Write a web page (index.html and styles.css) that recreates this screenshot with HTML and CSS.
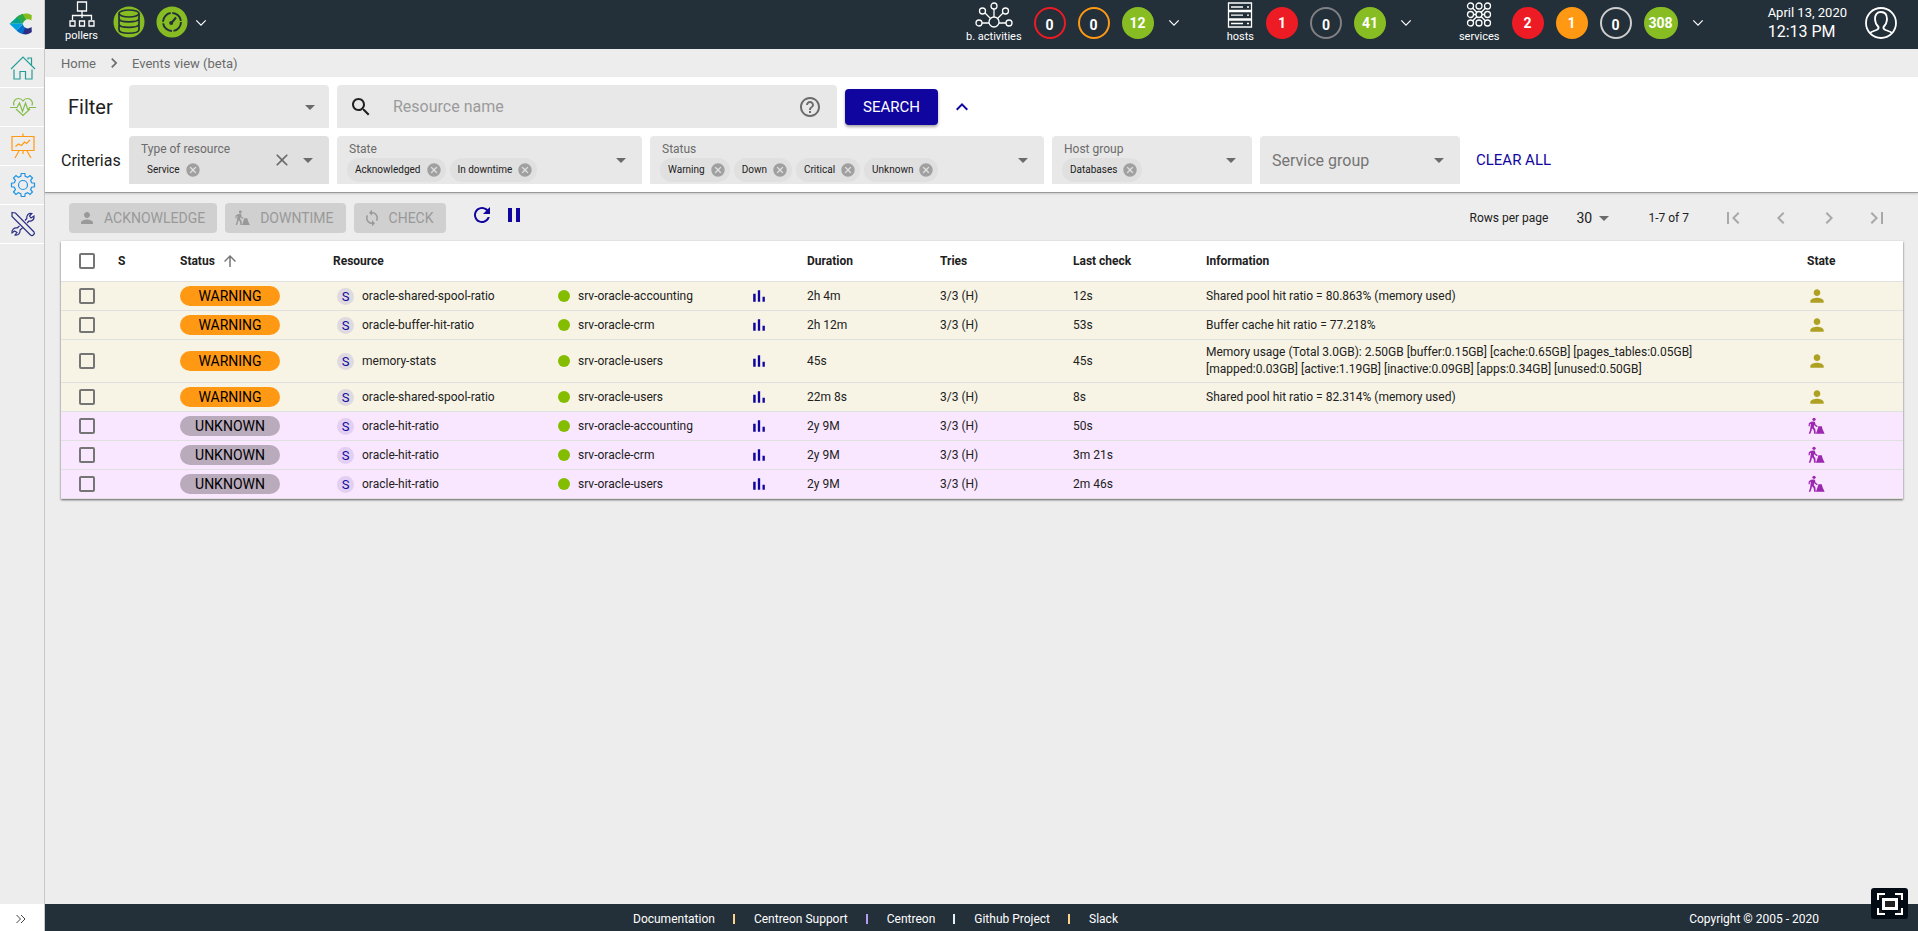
FILE: index.html
```html
<!DOCTYPE html>
<html lang="en">
<head>
<meta charset="utf-8">
<title>Centreon - Events view</title>
<link rel="stylesheet" href="styles.css">
</head>
<body>
<svg class="sprite" aria-hidden="true">
  <symbol id="i-person" viewBox="0 0 24 24"><path d="M12 12c2.21 0 4-1.79 4-4s-1.79-4-4-4-4 1.79-4 4 1.79 4 4 4zm0 2c-2.67 0-8 1.34-8 4v2h16v-2c0-2.66-5.33-4-8-4z"/></symbol>
  <symbol id="i-downtime" viewBox="0 -2 27 27"><circle cx="9.500" cy="2.400" r="2.200"/><path d="M5.500 5.800 9 5.300c1.200 0 1.700.6 1.900 1.500l.6 2.800 3 2.300-.9 1.200-3.200-2-.7-1.200-.5 3.100 2.100 2.800.6 6.200H9.600l-.6-5.200-2.200-2.400-.7 3.400-1.600 4.200H2.400l1.700-5L5.300 8.300 4 9l-.4 3H2l.5-4.300zM15.500 12h4.500l1 4 2.800 6H12l2-5.500z"/></symbol>
  <symbol id="i-sync" viewBox="0 0 24 24"><path d="M12 4V1L8 5l4 4V6c3.310 0 6 2.690 6 6 0 1.010-.25 1.970-.7 2.800l1.460 1.460C19.540 15.030 20 13.570 20 12c0-4.420-3.580-8-8-8zm0 14c-3.310 0-6-2.690-6-6 0-1.010.25-1.970.7-2.800L5.240 7.740C4.460 8.970 4 10.430 4 12c0 4.420 3.580 8 8 8v3l4-4-4-4v3z"/></symbol>
  <symbol id="i-refresh" viewBox="0 0 24 24"><path d="M17.650 6.350C16.200 4.900 14.210 4 12 4c-4.420 0-7.990 3.580-7.990 8s3.570 8 7.990 8c3.730 0 6.840-2.550 7.730-6h-2.080c-.82 2.330-3.040 4-5.650 4-3.310 0-6-2.690-6-6s2.690-6 6-6c1.660 0 3.140.69 4.220 1.780L13 11h7V4l-2.350 2.350z"/></symbol>
  <symbol id="i-pause" viewBox="0 0 24 24"><path d="M6 19h4V5H6v14zm8-14v14h4V5h-4z"/></symbol>
  <symbol id="i-search" viewBox="0 0 24 24"><path d="M15.500 14h-.79l-.28-.27C15.410 12.590 16 11.110 16 9.500 16 5.910 13.090 3 9.500 3S3 5.910 3 9.500 5.910 16 9.500 16c1.610 0 3.090-.59 4.230-1.570l.27.28v.79l5 4.990L20.490 19l-4.990-5zm-6 0C7.010 14 5 11.990 5 9.500S7.010 5 9.500 5 14 7.010 14 9.500 11.990 14 9.500 14z"/></symbol>
  <symbol id="i-help" viewBox="0 0 24 24"><path d="M11 18h2v-2h-2v2zm1-16C6.480 2 2 6.480 2 12s4.480 10 10 10 10-4.480 10-10S17.520 2 12 2zm0 18c-4.410 0-8-3.590-8-8s3.590-8 8-8 8 3.590 8 8-3.590 8-8 8zm0-14c-2.210 0-4 1.790-4 4h2c0-1.100.9-2 2-2s2 .9 2 2c0 2-3 1.750-3 5h2c0-2.250 3-2.500 3-5 0-2.210-1.790-4-4-4z"/></symbol>
  <symbol id="i-caret" viewBox="0 0 24 24"><path d="M7 10l5 5 5-5z"/></symbol>
  <symbol id="i-close" viewBox="0 0 24 24"><path d="M19 6.410L17.590 5 12 10.590 6.410 5 5 6.410 10.590 12 5 17.590 6.410 19 12 13.410 17.590 19 19 17.590 13.410 12z"/></symbol>
  <symbol id="i-cancel" viewBox="0 0 24 24"><path d="M12 2C6.470 2 2 6.470 2 12s4.470 10 10 10 10-4.470 10-10S17.530 2 12 2zm5 13.590L15.590 17 12 13.410 8.410 17 7 15.590 10.590 12 7 8.410 8.410 7 12 10.590 15.590 7 17 8.410 13.410 12 17 15.590z"/></symbol>
  <symbol id="i-up" viewBox="0 0 24 24"><path d="M4 12l1.410 1.410L11 7.830V20h2V7.830l5.580 5.590L20 12l-8-8-8 8z"/></symbol>
  <symbol id="i-less" viewBox="0 0 24 24"><path d="M12 8l-6 6 1.410 1.410L12 10.830l4.590 4.580L18 14z"/></symbol>
  <symbol id="i-chart" viewBox="0 0 24 24"><path d="M5 9.200h3V19H5zM10.600 5h2.800v14h-2.800zm5.600 8H19v6h-2.800z"/></symbol>
  <symbol id="i-right" viewBox="0 0 24 24"><path d="M10 6L8.590 7.410 13.170 12l-4.580 4.590L10 18l6-6z"/></symbol>
  <symbol id="i-left" viewBox="0 0 24 24"><path d="M15.410 7.410L14 6l-6 6 6 6 1.410-1.410L10.830 12z"/></symbol>
  <symbol id="i-first" viewBox="0 0 24 24"><path d="M18.410 16.590L13.820 12l4.590-4.590L17 6l-6 6 6 6zM6 6h2v12H6z"/></symbol>
  <symbol id="i-last" viewBox="0 0 24 24"><path d="M5.590 7.410L10.180 12l-4.590 4.590L7 18l6-6-6-6zM16 6h2v12h-2z"/></symbol>
  <symbol id="i-down" viewBox="0 0 14 8"><path d="M1.500 1 7 6.500 12.500 1" fill="none" stroke="currentColor" stroke-width="1.400"/></symbol>
</svg>

<div class="app">
  <nav class="sidebar" aria-label="Main menu">
    <a class="logo" href="#" aria-label="Centreon">
      <svg viewBox="0 0 24 24" width="24" height="24">
        <path fill="#84bd1c" d="M12.500 2.500C16 .9 20 1.200 22.800 3.200l-.4 5.300c-2.400-1.600-4.800-1.400-6.800 0z"/>
        <path fill="#2ca84a" d="M6.500 6.500C8.500 4 10.500 3 13.500 1.800l3.500 5.900c-1.600.8-2.600 2-3 3.800z"/>
        <path fill="#00a390" d="M.5 11.700 7.500 5.500l6.400 6.200z"/>
        <path fill="#009fdf" d="M.5 11.700h13.400l-6.400 6.800z"/>
        <path fill="#0072ce" d="M7.500 18.500 13.900 12c.3 1.900 1.300 3.200 3 4.100l-3.100 6c-2.500-.8-4.500-1.900-6.300-3.600z"/>
        <path fill="#2b2e83" d="m13.600 22 2.500-6.300c2.200 1.300 4.300 1 6.500-.6l.2 5c-2.700 2.300-6 2.900-9.200 1.900z"/>
      </svg>
    </a>
    <a class="nav-item teal" href="#" aria-label="Home">
      <svg viewBox="0 0 26 26" width="26" height="26"><path d="M1 14 13 2l12 12M18 4.500V3h3.500v7M4 14.500V24h6v-7.500h5.500V24H22v-9.500"/></svg>
    </a>
    <a class="nav-item lime" href="#" aria-label="Monitoring">
      <svg viewBox="0 0 26 26" width="26" height="26"><path d="M4 11.500C2.500 7 5.500 4.500 8.500 4.500c2 0 3.500 1 4.500 2.500 1-1.500 2.500-2.500 4.500-2.500 3 0 6 2.500 4.500 7M6 15l7 6.500 7-6.500M0 13.500h7L9.500 9l3 8.500 3-8.500 2.500 7 1.500-2.500H26"/></svg>
    </a>
    <a class="nav-item amber" href="#" aria-label="Reporting">
      <svg viewBox="0 0 26 26" width="26" height="26"><path d="M2 3.500h22v14H2zM13 3.500V.5M9 18l-4 7M17 18l4 7M13 18v3M5.500 13.500l3-2.500 3 1.500 3-3.500 2 1.500 3.500-3.500"/></svg>
    </a>
    <a class="nav-item blue" href="#" aria-label="Configuration">
      <svg viewBox="0 0 26 26" width="26" height="26"><circle cx="13" cy="13" r="4.500"/><path d="M10.800 4.400 11.200 1.500h3.600l.4 2.900 2.500 1L20 3.600 22.500 6l-1.900 2.300 1 2.500 2.900.4v3.600l-2.900.4-1 2.500 1.900 2.300-2.500 2.500-2.300-1.900-2.500 1-.4 2.900h-3.600l-.4-2.900-2.500-1L6 22.500 3.500 20l1.900-2.300-1-2.500-2.900-.4v-3.600l2.900-.4 1-2.500L3.500 6 6 3.500l2.300 1.900z"/></svg>
    </a>
    <a class="nav-item navy" href="#" aria-label="Administration">
      <svg viewBox="0 0 26 26" width="26" height="26"><path d="M2 1.500 5.500 2l18.500 19c1.500 2-1.500 4.500-3.500 3L2 5.500zM15 9.500l1.800-2c-.5-3 1.500-5.500 5-5L19.500 5l1.500 2 3-2c.5 3.500-2 5.500-5 5l-1.800 2M9.500 15l-2.500 2c-3-.5-5.500 2-5 5l2.500-2L7 21.500 5 24c3.500.5 5.500-2 5-5l2.500-2"/></svg>
    </a>
    <button class="expand" type="button" aria-label="Expand menu">
      <svg viewBox="0 0 12 10" width="12" height="10"><path d="M1.500 1 5.500 5l-4 4M6 1l4 4-4 4"/></svg>
    </button>
  </nav>

  <div class="page">
    <header class="topbar">
      <div class="group pollers">
        <a class="menu" href="#">
          <svg class="line" viewBox="0 0 26 26" width="26" height="26"><path d="M8.500 1h9v9h-9zM13 10v7M3.500 19v-4.500h19V19M1 20h5v5H1zM10.500 20h5v5h-5zM20 20h5v5h-5z"/></svg>
          <span>pollers</span>
        </a>
        <span class="poller-icon"><svg viewBox="0 0 32 32" width="32" height="32"><circle cx="16" cy="16" r="15.500" fill="#87bd23"/><g fill="none" stroke="#232f39" stroke-width="1.700"><ellipse cx="16" cy="7.500" rx="10" ry="3.500"/><path d="M6 8v4.500c0 4.500 20 4.500 20 0V8M6 13.500V18c0 4.500 20 4.500 20 0v-4.500M6 19v4.500c0 5 20 5 20 0V19"/></g></svg></span>
        <span class="poller-icon"><svg viewBox="0 0 32 32" width="32" height="32"><circle cx="16" cy="16" r="15.500" fill="#87bd23"/><g fill="none" stroke="#232f39" stroke-width="2"><circle cx="16" cy="16" r="9" stroke-dasharray="12.500 1.640"/><path d="m15 17.500 5-6"/></g><circle cx="15.200" cy="17" r="2" fill="#232f39"/></svg></span>
        <button class="toggle" type="button" aria-label="Pollers details"><svg width="12" height="8"><use href="#i-down"/></svg></button>
      </div>

      <div class="group">
        <a class="menu" href="#">
          <svg class="line" viewBox="0 0 38 26" width="38" height="26"><circle cx="19" cy="20" r="5"/><circle cx="19" cy="4" r="3"/><circle cx="7.500" cy="9" r="3"/><circle cx="30.500" cy="9" r="3"/><circle cx="4" cy="21" r="3"/><circle cx="34" cy="21" r="3"/><path d="M19 7v8M10 11l5.500 5.500M28 11l-5.500 5.500M7 21h7M24 21h7"/></svg>
          <span>b. activities</span>
        </a>
        <a class="count ring-red" href="#">0</a>
        <a class="count ring-orange" href="#">0</a>
        <a class="count green" href="#">12</a>
        <button class="toggle" type="button" aria-label="Business activities details"><svg width="12" height="8"><use href="#i-down"/></svg></button>
      </div>

      <div class="group">
        <a class="menu" href="#">
          <svg class="line" viewBox="0 0 26 26" width="26" height="26"><path d="M1.500 1h23v7.500h-23zM1.500 9.500h23V17h-23zM1.500 18h23v7h-23zM4 5h12M4 13.200h12M4 21.500h12M20 5h2M20 13.200h2M20 21.500h2"/></svg>
          <span>hosts</span>
        </a>
        <a class="count red" href="#">1</a>
        <a class="count ring-gray" href="#">0</a>
        <a class="count green" href="#">41</a>
        <button class="toggle" type="button" aria-label="Hosts details"><svg width="12" height="8"><use href="#i-down"/></svg></button>
      </div>

      <div class="group">
        <a class="menu" href="#">
          <svg class="line" viewBox="0 0 26 26" width="26" height="26"><circle cx="4.500" cy="4" r="3"/><circle cx="13" cy="4" r="3"/><circle cx="21.500" cy="4" r="3"/><circle cx="4.500" cy="12.500" r="3"/><circle cx="13" cy="12.500" r="3"/><circle cx="21.500" cy="12.500" r="3"/><circle cx="4.500" cy="21" r="3"/><circle cx="13" cy="21" r="3"/><circle cx="21.500" cy="21" r="3"/><path d="m6.500 6 4.500 4.500M19.500 6 15 10.500M6.500 19l4.500-4.500M19.500 19 15 14.500M7.500 12.500H10M16 12.500h2.500"/></svg>
          <span>services</span>
        </a>
        <a class="count red" href="#">2</a>
        <a class="count orange" href="#">1</a>
        <a class="count ring-light" href="#">0</a>
        <a class="count green" href="#">308</a>
        <button class="toggle" type="button" aria-label="Services details"><svg width="12" height="8"><use href="#i-down"/></svg></button>
      </div>

      <div class="clock"><span class="date">April 13, 2020</span><span class="time">12:13 PM</span></div>
      <button class="avatar" type="button" aria-label="User profile">
        <svg class="line" viewBox="0 0 32 32" width="32" height="32"><circle cx="16" cy="16" r="15"/><path d="M5 26c1.500-1.500 4-2 6.500-3 1.500-.7 2.500-1.500 2-3-2-2-3.500-4-3.500-8 0-4.500 2-7 6-7s6 2.500 6 7c0 4-1.500 6-3.500 8-.5 1.500.5 2.300 2 3 2.500 1 5 1.500 6.500 3"/></svg>
      </button>
    </header>

    <nav class="breadcrumb" aria-label="Breadcrumb">
      <a href="#">Home</a>
      <svg width="20" height="20"><use href="#i-right"/></svg>
      <a href="#">Events view (beta)</a>
    </nav>

    <main class="content">
      <form class="filters">
        <div class="filter-row">
          <label class="filter-title" for="filter">Filter</label>
          <div class="select-box w-200">
            <select id="filter"><option></option></select>
            <svg class="caret" width="24" height="24"><use href="#i-caret"/></svg>
          </div>
          <div class="search-box">
            <svg width="24" height="24"><use href="#i-search"/></svg>
            <input type="text" aria-label="Resource name" placeholder="Resource name">
            <button type="button" aria-label="Search help"><svg width="24" height="24"><use href="#i-help"/></svg></button>
          </div>
          <button class="search-btn" type="button">SEARCH</button>
          <button class="collapse" type="button" aria-label="Hide criterias"><svg width="24" height="24"><use href="#i-less"/></svg></button>
        </div>

        <div class="filter-row">
          <span class="criteria-title">Criterias</span>
          <div class="field w-200 hover">
            <div class="field-body"><label for="c-type">Type of resource</label>
              <div class="chips"><span class="chip">Service<button type="button" aria-label="Remove Service"><svg width="16" height="16"><use href="#i-cancel"/></svg></button></span><input id="c-type" type="text"></div></div>
            <button class="clear" type="button" aria-label="Clear"><svg width="20" height="20"><use href="#i-close"/></svg></button>
            <button type="button" aria-label="Open"><svg width="24" height="24"><use href="#i-caret"/></svg></button>
          </div>
          <div class="field w-305">
            <div class="field-body"><label for="c-state">State</label>
              <div class="chips"><span class="chip">Acknowledged<button type="button" aria-label="Remove Acknowledged"><svg width="16" height="16"><use href="#i-cancel"/></svg></button></span><span class="chip">In downtime<button type="button" aria-label="Remove In downtime"><svg width="16" height="16"><use href="#i-cancel"/></svg></button></span><input id="c-state" type="text"></div></div>
            <button type="button" aria-label="Open"><svg width="24" height="24"><use href="#i-caret"/></svg></button>
          </div>
          <div class="field w-394">
            <div class="field-body"><label for="c-status">Status</label>
              <div class="chips"><span class="chip">Warning<button type="button" aria-label="Remove Warning"><svg width="16" height="16"><use href="#i-cancel"/></svg></button></span><span class="chip">Down<button type="button" aria-label="Remove Down"><svg width="16" height="16"><use href="#i-cancel"/></svg></button></span><span class="chip">Critical<button type="button" aria-label="Remove Critical"><svg width="16" height="16"><use href="#i-cancel"/></svg></button></span><span class="chip">Unknown<button type="button" aria-label="Remove Unknown"><svg width="16" height="16"><use href="#i-cancel"/></svg></button></span><input id="c-status" type="text"></div></div>
            <button type="button" aria-label="Open"><svg width="24" height="24"><use href="#i-caret"/></svg></button>
          </div>
          <div class="field w-200">
            <div class="field-body"><label for="c-host">Host group</label>
              <div class="chips"><span class="chip">Databases<button type="button" aria-label="Remove Databases"><svg width="16" height="16"><use href="#i-cancel"/></svg></button></span><input id="c-host" type="text"></div></div>
            <button type="button" aria-label="Open"><svg width="24" height="24"><use href="#i-caret"/></svg></button>
          </div>
          <div class="field w-200">
            <input class="empty-input" type="text" aria-label="Service group" placeholder="Service group">
            <button type="button" aria-label="Open"><svg width="24" height="24"><use href="#i-caret"/></svg></button>
          </div>
          <button class="clear-all" type="button">CLEAR ALL</button>
        </div>
      </form>

      <section class="listing">
        <div class="toolbar">
          <button class="action" type="button" disabled><svg width="18" height="18"><use href="#i-person"/></svg>ACKNOWLEDGE</button>
          <button class="action" type="button" disabled><svg width="18" height="18"><use href="#i-downtime"/></svg>DOWNTIME</button>
          <button class="action" type="button" disabled><svg width="18" height="18"><use href="#i-sync"/></svg>CHECK</button>
          <div class="refresh">
            <button type="button" aria-label="Refresh"><svg width="24" height="24"><use href="#i-refresh"/></svg></button>
            <button type="button" aria-label="Pause"><svg width="24" height="24"><use href="#i-pause"/></svg></button>
          </div>
          <div class="pagination">
            <label for="rows">Rows per page</label>
            <span class="rows"><select id="rows"><option>30</option></select><svg class="caret" width="24" height="24"><use href="#i-caret"/></svg></span>
            <span class="range">1-7 of 7</span>
            <button type="button" disabled aria-label="First page"><svg width="24" height="24"><use href="#i-first"/></svg></button>
            <button type="button" disabled aria-label="Previous page"><svg width="24" height="24"><use href="#i-left"/></svg></button>
            <button type="button" disabled aria-label="Next page"><svg width="24" height="24"><use href="#i-right"/></svg></button>
            <button type="button" disabled aria-label="Last page"><svg width="24" height="24"><use href="#i-last"/></svg></button>
          </div>
        </div>

        <table class="events">
          <colgroup><col class="c-check"><col class="c-sev"><col class="c-status"><col class="c-res"><col class="c-host"><col class="c-graph"><col class="c-num"><col class="c-num"><col class="c-num"><col><col class="c-state"></colgroup>
          <thead>
            <tr><th class="check"><input type="checkbox" aria-label="Select all"></th><th>S</th><th><span class="sort">Status<svg width="18" height="18"><use href="#i-up"/></svg></span></th><th>Resource</th><th></th><th></th><th>Duration</th><th>Tries</th><th>Last check</th><th>Information</th><th>State</th></tr>
          </thead>
          <tbody id="rows-body"></tbody>
        </table>
      </section>
    </main>

    <footer class="footer">
      <div class="links"><a href="#">Documentation</a><i class="sep yellow"></i><a href="#">Centreon Support</a><i class="sep violet"></i><a href="#">Centreon</a><i class="sep"></i><a href="#">Github Project</a><i class="sep yellow"></i><a href="#">Slack</a></div>
      <span class="copyright">Copyright © 2005 - 2020</span>
    </footer>
  </div>
</div>
<button class="fullscreen" type="button" aria-label="Full screen">
  <svg viewBox="0 0 26 22" width="26" height="22" fill="none" stroke="#fff"><path stroke-width="2" d="M1 7V1h7M18 1h7v6M25 15v6h-7M8 21H1v-6"/><path stroke-width="3" d="M6.500 6.500h13v9h-13z"/></svg>
</button>
<script src="app.js"></script>
</body>
</html>
```

FILE: app.js
```js
const events = [
  ["WARNING", "oracle-shared-spool-ratio", "srv-oracle-accounting", "2h 4m", "3/3 (H)", "12s", "Shared pool hit ratio = 80.863% (memory used)"],
  ["WARNING", "oracle-buffer-hit-ratio", "srv-oracle-crm", "2h 12m", "3/3 (H)", "53s", "Buffer cache hit ratio = 77.218%"],
  ["WARNING", "memory-stats", "srv-oracle-users", "45s", "", "45s", "Memory usage (Total 3.0GB): 2.50GB [buffer:0.15GB] [cache:0.65GB] [pages_tables:0.05GB] [mapped:0.03GB] [active:1.19GB] [inactive:0.09GB] [apps:0.34GB] [unused:0.50GB]"],
  ["WARNING", "oracle-shared-spool-ratio", "srv-oracle-users", "22m 8s", "3/3 (H)", "8s", "Shared pool hit ratio = 82.314% (memory used)"],
  ["UNKNOWN", "oracle-hit-ratio", "srv-oracle-accounting", "2y 9M", "3/3 (H)", "50s", ""],
  ["UNKNOWN", "oracle-hit-ratio", "srv-oracle-crm", "2y 9M", "3/3 (H)", "3m 21s", ""],
  ["UNKNOWN", "oracle-hit-ratio", "srv-oracle-users", "2y 9M", "3/3 (H)", "2m 46s", ""]
];

document.getElementById("rows-body").innerHTML = events.map(([status, name, host, duration, tries, last, info]) => {
  const acknowledged = status === "WARNING";
  return `<tr class="${acknowledged ? "ack" : "down"}">
    <td class="check"><input type="checkbox" aria-label="Select ${name} on ${host}"></td>
    <td></td>
    <td><span class="status">${status}</span></td>
    <td><span class="resource"><span class="type">S</span><span>${name}</span></span></td>
    <td><span class="host"><span class="dot"></span><span>${host}</span></span></td>
    <td><button class="graph" type="button" aria-label="Graph"><svg width="20" height="20"><use href="#i-chart"/></svg></button></td>
    <td>${duration}</td><td>${tries}</td><td>${last}</td>
    <td><p class="info">${info}</p></td>
    <td class="state"><svg width="20" height="20"><use href="#${acknowledged ? "i-person" : "i-downtime"}"/></svg></td>
  </tr>`;
}).join("");
```

FILE: styles.css
```css
* { box-sizing: border-box; }
body { margin: 0; font-family: Roboto, "Liberation Sans", sans-serif; font-size: 12px; color: #212121; background: #ededed; }
button, input, select { font: inherit; color: inherit; margin: 0; padding: 0; border: 0; background: none; outline: 0; }
button { display: inline-flex; align-items: center; justify-content: center; cursor: pointer; }
a { color: inherit; text-decoration: none; }
svg { display: block; flex: none; fill: currentColor; }
.sprite { display: none; }

.app { display: flex; min-height: 100vh; }

.sidebar { display: flex; flex-direction: column; width: 45px; flex: none; border-right: 1px solid #c8c8c8; }
.logo { display: flex; align-items: center; justify-content: center; height: 49px; padding-right: 2px; border-bottom: 1px solid #fff; }
.nav-item { display: flex; align-items: center; justify-content: center; height: 39px; padding-left: 2px; border-bottom: 1px solid #fff; }
.nav-item svg { fill: none; stroke: currentColor; stroke-width: 1.2; }
.teal { color: #239f97; }
.lime { color: #84bd4c; }
.amber { color: #ff9913; }
.blue { color: #1e93e4; }
.navy { color: #2b2e83; }
.expand { height: 27px; margin-top: auto; padding: 2px 2px 0 0; background: #fff; }
.expand svg { fill: none; stroke: #424242; }

.page { display: flex; flex-direction: column; flex: 1; min-width: 0; }

.topbar { display: flex; height: 49px; padding-right: 21px; background: #232f39; color: #fff; }
.group { display: flex; align-items: flex-start; margin-left: 47px; }
.pollers { margin-left: 20px; margin-right: auto; }
.menu { display: flex; flex-direction: column; align-items: center; gap: 2px; padding-top: 2px; margin-right: 12px; font-size: 11px; line-height: 14px; }
.line { fill: none; stroke: #fff; stroke-width: 1.3; }
.poller-icon { margin: 6px 11px 0 0; }
.pollers .menu { margin-right: 15px; padding-top: 1px; }
.pollers .toggle { margin-left: -4px; }
.count { display: flex; align-items: center; justify-content: center; min-width: 32px; height: 32px; padding: 0 5px; margin: 7px 12px 0 0; border-radius: 16px; font-size: 14px; font-weight: 700; }
.red { background: #ed1c24; }
.orange { background: #ff9913; }
.green { background: #87bd23; }
.ring-red, .ring-orange, .ring-gray, .ring-light { border: 2px solid #ed1c24; padding-top: 3px; }
.ring-orange { border-color: #ff9913; }
.ring-gray { border-color: #818185; }
.ring-light { border-color: #cdcdcd; }
.toggle { margin-top: 19px; margin-left: 2px; }
.clock { display: flex; flex-direction: column; margin: 4px 18px 0 64px; font-size: 13px; line-height: 17px; }
.time { font-size: 16px; line-height: 22px; }
.avatar { align-self: flex-start; margin-top: 7px; }
.avatar .line { stroke-width: 1.8; }

.breadcrumb { display: flex; align-items: center; gap: 8px; height: 28px; padding-left: 16px; font-size: 13px; color: #6b6b6b; }

.content { flex: 1; }
.filters { display: flex; flex-direction: column; gap: 8px; padding: 8px 16px; background: #fff; border-bottom: 1px solid #999; box-shadow: 0 1px 2px rgba(0, 0, 0, .15); }
.filter-row { display: flex; align-items: center; }
.filter-title { width: 68px; padding-left: 7px; font-size: 20px; }
.criteria-title { width: 68px; font-size: 16px; }
.w-200 { width: 200px; }
.w-305 { width: 305px; }
.w-394 { width: 394px; }
.select-box, .search-box, .field { display: flex; align-items: center; flex: none; margin-right: 8px; background: #e8e8e8; border-radius: 4px 4px 0 0; }
.select-box { height: 43px; color: #6b6b6b; }
.select-box select { appearance: none; flex: 1; height: 43px; padding-left: 12px; }
.caret { pointer-events: none; }
.select-box .caret { margin-right: 7px; }
.search-box { width: 500px; height: 43px; padding: 0 15px 0 12px; }
.search-box input { flex: 1; padding-left: 20px; font-size: 16px; }
.search-box button { color: #6b6b6b; }
input::placeholder { color: #9b9b9b; opacity: 1; }
.search-btn { height: 36px; padding: 0 18px; border-radius: 4px; background: #10069f; color: #fff; font-size: 15px; box-shadow: 0 2px 3px rgba(0, 0, 0, .35); }
.collapse { margin-left: 12px; color: #10069f; }

.field { height: 48px; padding: 0 9px 0 10px; color: #6b6b6b; }
.hover { background: #e0e0e0; }
.field-body { flex: 1; min-width: 0; padding-top: 2px; }
.field label { display: block; padding-left: 2px; font-size: 12px; line-height: 16px; margin-bottom: 1px; }
.chips { display: flex; gap: 4px; }
.chips input { width: 0; flex: 1; }
.chip { display: flex; align-items: center; gap: 5px; height: 24px; padding: 0 4px 0 8px; border-radius: 12px; background: #e0e0e0; color: #212121; font-size: 10px; }
.chip button { color: #a0a0a0; }
.clear { margin-right: 4px; }
.field .empty-input { flex: 1; min-width: 0; padding-left: 2px; font-size: 16px; }
.empty-input::placeholder { color: #757575; }
.clear-all { margin-left: 8px; color: #10069f; font-size: 15px; }

.listing { padding: 10px 15px 0 16px; }
.toolbar { display: flex; align-items: center; gap: 8px; height: 30px; margin-bottom: 8px; padding-left: 8px; }
.action { gap: 8px; height: 30px; padding: 0 12px 0 9px; border-radius: 4px; background: #d0d0d0; color: #999; font-size: 14px; }
.refresh { display: flex; gap: 8px; margin-left: 16px; padding-bottom: 6px; color: #10069f; }
.pagination { display: flex; align-items: center; margin-left: auto; padding-right: 14px; color: #212121; }
.pagination button { margin-left: 24px; color: #a8a8a8; }
.pagination .range { margin-right: 8px; }
.rows { display: flex; align-items: center; margin: 0 32px 0 28px; color: #6b6b6b; }
.rows select { appearance: none; color: #212121; font-size: 14px; }

.events { width: 100%; table-layout: fixed; border-collapse: separate; border-spacing: 0; background: #fff; box-shadow: 0 1px 2px rgba(0, 0, 0, .6); }
.c-check { width: 57px; }
.c-sev { width: 62px; }
.c-status { width: 153px; }
.c-res { width: 225px; }
.c-host { width: 191px; }
.c-graph { width: 58px; }
.c-num { width: 133px; }
.c-state { width: 96px; }
.events th { height: 41px; padding: 0; text-align: left; font-weight: 700; border-bottom: 1px solid #e0e0e0; }
.events td { height: 29px; padding: 0; line-height: 17px; border-bottom: 1px solid #e0e0e0; }
.events .check { padding-left: 18px; }
.events input { appearance: none; display: block; width: 16px; height: 16px; border: 2px solid #757575; border-radius: 2px; }
.ack { background: #f7f4e5; }
.down { background: #f9e7ff; }
.sort { display: flex; align-items: center; gap: 6px; }
.sort svg { color: #757575; }
.status { display: block; width: 100px; height: 20px; border-radius: 10px; background: #ff9913; font-size: 14px; line-height: 20px; text-align: center; color: #000; }
.down .status { background: #b9aabc; }
.resource, .host { display: flex; align-items: center; }
.resource { gap: 8px; padding-left: 4px; }
.type { width: 17px; border-radius: 9px; background: #dfdadf; color: #10069f; font-size: 13px; text-align: center; }
.down .type { background: #e2cff2; }
.host { gap: 8px; }
.dot { width: 12px; height: 12px; border-radius: 6px; background: #84bd00; }
.graph { display: flex; color: #10069f; }
.info { max-width: 560px; margin: 4px 0; }
.state { color: #ada023; }
.down .state { color: #9c27b0; }

.footer { display: flex; align-items: center; height: 27px; padding: 2px 99px 0 588px; background: #232f39; color: #fff; }
.links { display: flex; align-items: center; }
.sep { width: 2px; height: 10px; margin: 0 19px 0 18px; background: #e8eef2; }
.yellow { background: #ffd28a; }
.violet { background: #b79cf0; }
.copyright { margin-left: auto; }
.fullscreen { position: fixed; right: 10px; bottom: 12px; width: 37px; height: 31px; border-radius: 3px; background: #020a14; }
```
